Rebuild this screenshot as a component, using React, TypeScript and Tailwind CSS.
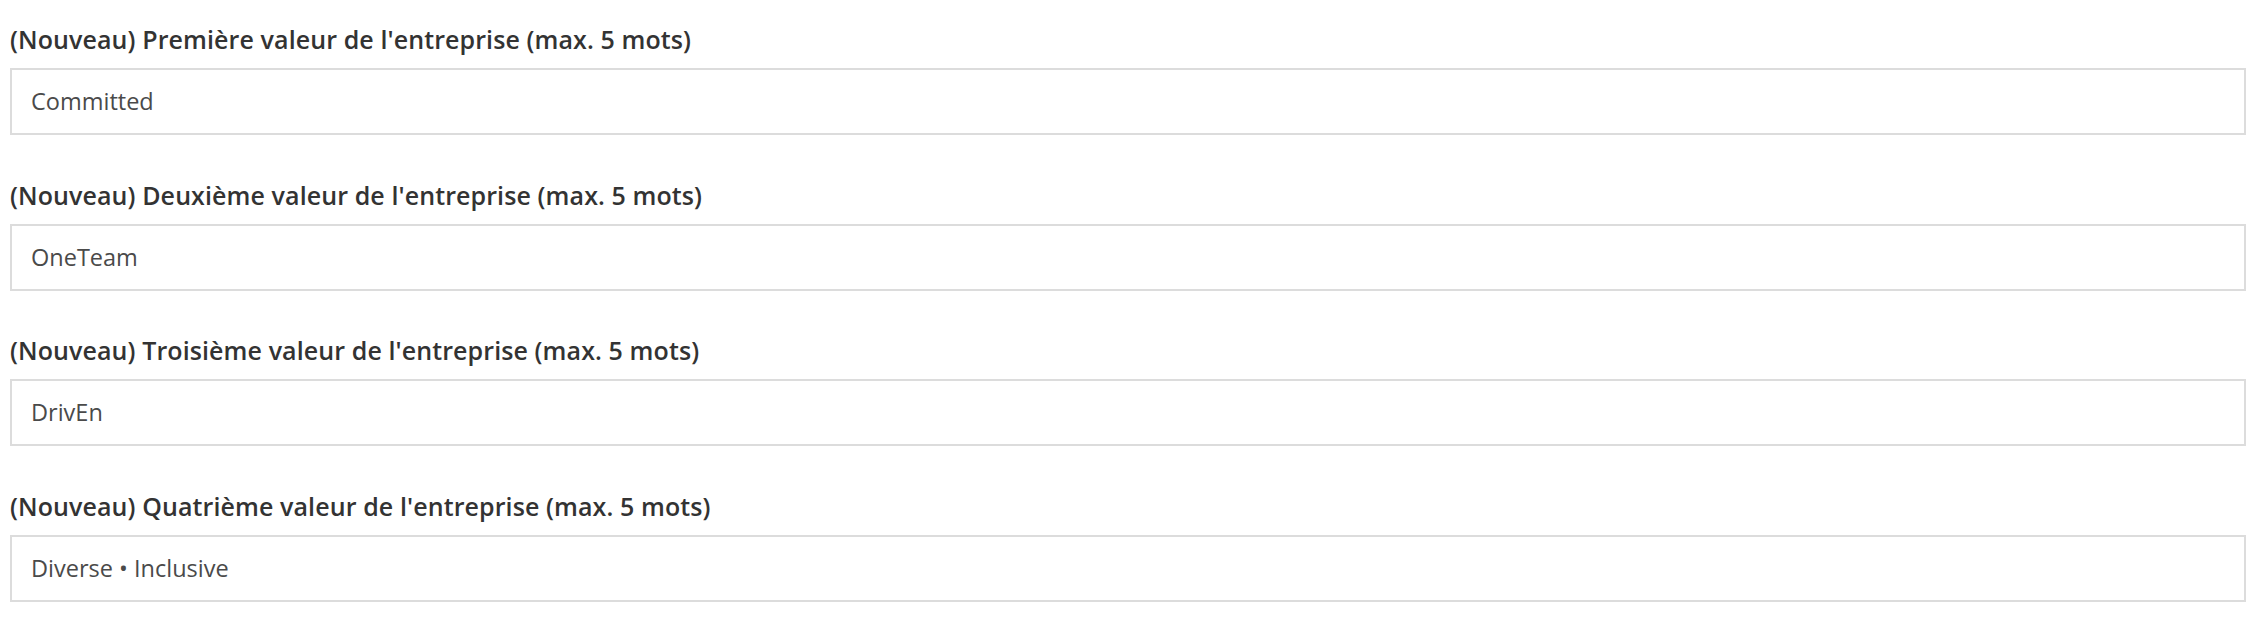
import React from "react";

interface ValueField {
  id: string;
  label: string;
  value: string;
}

const fields: ValueField[] = [
  {
    id: "first",
    label: "(Nouveau) Première valeur de l'entreprise (max. 5 mots)",
    value: "Committed",
  },
  {
    id: "second",
    label: "(Nouveau) Deuxième valeur de l'entreprise (max. 5 mots)",
    value: "OneTeam",
  },
  {
    id: "third",
    label: "(Nouveau) Troisième valeur de l'entreprise (max. 5 mots)",
    value: "DrivEn",
  },
  {
    id: "fourth",
    label: "(Nouveau) Quatrième valeur de l'entreprise (max. 5 mots)",
    value: "Diverse • Inclusive",
  },
];

const App: React.FC = () => {
  return (
    <div className="min-h-screen bg-white pl-[10px] pr-[14px] pt-[24px] font-['Open_Sans','Liberation_Sans',sans-serif]">
      <div className="flex flex-col gap-[44.67px]">
        {fields.map((field) => (
          <div key={field.id} className="flex flex-col gap-[14px]">
            <label
              htmlFor={field.id}
              className="h-[30px] text-[25px] leading-[30px] font-semibold tracking-[0.1px] text-[#333333]"
            >
              {field.label}
            </label>
            <div
              id={field.id}
              className="flex h-[67px] items-center border-2 border-[#dcdcdc] bg-white pl-[19px] text-[23.5px] text-[#4a4a4a]"
            >
              {field.value}
            </div>
          </div>
        ))}
      </div>
    </div>
  );
};

export default App;
